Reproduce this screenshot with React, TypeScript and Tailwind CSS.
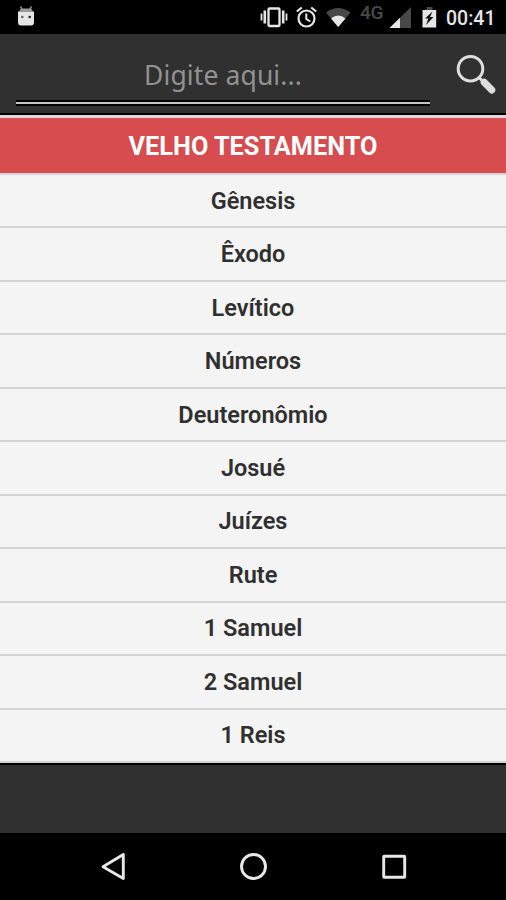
const books = [
  "Gênesis",
  "Êxodo",
  "Levítico",
  "Números",
  "Deuteronômio",
  "Josué",
  "Juízes",
  "Rute",
  "1 Samuel",
  "2 Samuel",
  "1 Reis",
];

function StatusBar() {
  return (
    <div className="flex h-[34px] shrink-0 items-start bg-black pl-[17px] pr-[11px] text-[#e6e6e6]">
      <svg width="18" height="34" viewBox="17 0 18 34">
        <path d="M20.5 6.5l2 3.5M31.5 6.5l-2 3.5" stroke="#777" strokeWidth="1.8" />
        <path d="M19.500 11.500q0-3 3-3h7q3 0 3 3z" fill="#999" />
        <path d="M18 11.500h16v10.500q0 3.500-3 3.500H21q-3 0-3-3.500z" fill="#e6e6e6" />
        <circle cx="22.300" cy="17" r="1.300" fill="#666" />
        <circle cx="29.700" cy="17" r="1.300" fill="#222" />
      </svg>

      <div className="ml-auto flex">
        {/* Vibrate */}
        <svg width="28" height="34" viewBox="260 0 28 34" fill="none" stroke="currentColor">
          <rect x="268.500" y="8.500" width="11" height="17.500" rx="1" strokeWidth="2.300" />
          <path d="M264.800 10.500v13M283.200 10.500v13" strokeWidth="2.600" />
          <path d="M261.500 13.500v7M286.500 13.500v7" strokeWidth="1.800" />
        </svg>

        {/* Alarm */}
        <svg className="ml-2" width="22" height="34" viewBox="296 0 22 34" fill="none" stroke="currentColor">
          <circle cx="306.500" cy="18.500" r="8" strokeWidth="2.200" />
          <path d="M296.800 11.500l5-4M316.200 11.500l-5-4" strokeWidth="2.200" />
          <path d="M306.300 13.500v5.500l4 2.500" strokeWidth="2" />
        </svg>

        {/* Wifi */}
        <svg className="ml-2" width="26" height="34" viewBox="326 0 26 34">
          <path d="M326 12.500Q338 3.500 350.500 12.500L338.200 27z" fill="#484848" />
          <path d="M331 18.500Q338.200 12.500 345.500 18.500L338.200 27z" fill="currentColor" />
        </svg>

        <span className="ml-2 w-[26px] pt-[2px] text-[19px] font-medium leading-[22px] tracking-[-0.2px] text-[#484848]">
          4G
        </span>

        {/* Signal */}
        <svg className="ml-[3px]" width="23" height="34" viewBox="389 0 23 34">
          <path d="M411 7v21H389.500z" fill="#484848" />
          <path d="M400 17.800V28H389.500z" fill="currentColor" />
        </svg>

        {/* Battery */}
        <svg className="ml-2.5" width="15" height="34" viewBox="422 0 15 34">
          <path d="M426.500 7h6v3h-6z" fill="#484848" />
          <path d="M422.500 10h13.700v17.500h-13.700z" fill="currentColor" />
          <path d="M432.500 11.500l-7.500 7h3.300l-2.300 6.500 7.500-8h-3.500z" fill="#111" />
        </svg>

        <span className="ml-[9px] w-[49px] whitespace-nowrap pt-[7px] text-[19.500px] font-medium leading-[23px]">
          00:41
        </span>
      </div>
    </div>
  );
}

function SearchHeader() {
  return (
    <div className="flex h-[79px] shrink-0 bg-[#303030] pl-4 pt-[15px]">
      <div className="flex h-[57px] w-[414px] flex-col">
        <div className="h-[51px] pt-2 text-center font-['Noto_Sans',sans-serif] text-[26.500px] leading-9 tracking-[0.1px] text-[#929292]">
          Digite aqui...
        </div>
        <div className="h-[6px] shrink-0 border-y-2 border-black bg-[#c4c4c4]" />
      </div>
      <svg className="ml-[25px]" width="42" height="46" viewBox="455 49 42 46">
        <circle cx="470.500" cy="68.700" r="12.300" fill="none" stroke="#dedede" strokeWidth="3" />
        <path d="M479 77.500l4 4" stroke="#dedede" strokeWidth="3" />
        <path d="M484.200 82.200l7.600 7.800" stroke="#dedede" strokeWidth="7" strokeLinecap="round" />
      </svg>
    </div>
  );
}

function BookList() {
  return (
    <div className="h-[652px] shrink-0 border-b-2 border-t-2 border-black">
      <div className="h-[3px] bg-[#e2d5de]" />
      <h1 className="flex h-[55px] items-center justify-center bg-[#d64c4f] pt-0.5 text-[25.300px] font-bold leading-8 text-white">
        VELHO TESTAMENTO
      </h1>
      <ul className="flex h-[590px] flex-col border-t-2 border-[#d8d3d8]">
        {books.map((book) => (
          <li
            key={book}
            className="flex flex-1 items-center justify-center border-b-2 border-[#d3d3d6] bg-[#f4f4f4] text-[23.500px] font-semibold leading-7 text-[#303030]"
          >
            {book}
          </li>
        ))}
      </ul>
    </div>
  );
}

function NavigationBar() {
  return (
    <div className="flex h-[67px] shrink-0 justify-center bg-black">
      <svg width="310" height="67" viewBox="98 833 310 67" fill="none" stroke="#e8e8e8" strokeWidth="2.900" strokeLinejoin="round">
        <path d="M103 866.700L123.300 854.500V878.500z" />
        <circle cx="253.500" cy="866.500" r="12" />
        <rect x="383.700" y="856.300" width="21" height="21" rx="0.500" />
      </svg>
    </div>
  );
}

export default function App() {
  return (
    <div className="flex h-[900px] w-[506px] flex-col overflow-hidden bg-[#303030] font-[Roboto,sans-serif]">
      <StatusBar />
      <SearchHeader />
      <BookList />
      <div className="flex-1 bg-[#303030]" />
      <NavigationBar />
    </div>
  );
}
